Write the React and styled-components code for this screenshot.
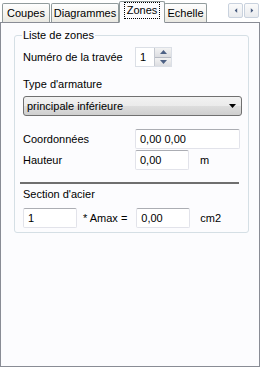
import React from 'react';
import styled, { createGlobalStyle } from 'styled-components';

const Global = createGlobalStyle`
  html, body { margin: 0; padding: 0; background: #ffffff; }
  body { font-family: "Liberation Sans", Arial, sans-serif; font-size: 11px; color: #000; }
`;

const Frame = styled.div`
  width: 261px;
  height: 367px;
  background: #ffffff;
  display: flex;
  flex-direction: column;
`;

const TabStrip = styled.div`
  height: 22px;
  display: flex;
  align-items: flex-end;
  padding-left: 2px;
  position: relative;
  z-index: 1;
`;

const Tab = styled.div`
  box-sizing: border-box;
  height: ${p => (p.$active ? '22px' : '19px')};
  width: ${p => p.$w}px;
  margin-left: ${p => (p.$active ? '-1px' : '0')};
  margin-right: ${p => (p.$active ? '-1px' : '1px')};
  border: 1px solid #919b9c;
  border-bottom: ${p => (p.$active ? '1px solid #fcfcfe' : 'none')};
  border-radius: 2px 2px 0 0;
  background: ${p => (p.$active ? '#fcfcfe' : 'linear-gradient(#fefefe, #f4f3ee 60%, #e9e8e2)')};
  display: flex;
  align-items: ${p => (p.$active ? 'flex-start' : 'center')};
  justify-content: center;
  padding-top: ${p => (p.$active ? '2px' : '0')};
  font-size: 11px;
  line-height: 13px;
  margin-bottom: ${p => (p.$active ? '-1px' : '0')};
`;

const Focus = styled.span`
  outline: 1px dotted #000;
  outline-offset: 1px;
  padding: 0 1px;
`;

const Scroller = styled.div`
  margin-left: auto;
  align-self: flex-start;
  margin-top: 3px;
  margin-right: 2px;
  display: flex;
  gap: 1px;
`;

const ScrollBtn = styled.div`
  box-sizing: border-box;
  width: 15px;
  height: 15px;
  border: 1px solid #c9d2de;
  border-radius: 2px;
  background: linear-gradient(#fbfbfb, #e9ebee);
  display: flex;
  align-items: center;
  justify-content: center;
`;

const Panel = styled.div`
  box-sizing: border-box;
  width: 260px;
  height: 345px;
  border: 1px solid #898c95;
  background: #fcfcfe;
  padding: 6px 10px 0 13px;
`;

const GroupBox = styled.fieldset`
  box-sizing: border-box;
  margin: 0;
  width: 235px;
  height: 204px;
  border: 1px solid #d5dfe5;
  border-radius: 3px;
  padding: 0 0 0 8px;
  display: flex;
  flex-direction: column;
`;

const Legend = styled.legend`
  padding: 0 1px;
  margin-left: -1px;
  font-size: 11px;
  line-height: 13px;
`;

const Row = styled.div`
  display: flex;
  align-items: center;
  height: ${p => p.$h || 20}px;
  margin-top: ${p => p.$mt || 0}px;
`;

const Label = styled.div`
  width: ${p => p.$w || 112}px;
  flex: none;
  white-space: nowrap;
`;

const TextBox = styled.div`
  box-sizing: border-box;
  width: ${p => p.$w}px;
  height: 20px;
  margin-left: ${p => p.$ml || 0}px;
  border: 1px solid #e2e3ea;
  border-top-color: #abadb3;
  border-radius: 2px;
  background: #fff;
  padding: 0 4px;
  display: flex;
  align-items: center;
  flex: none;
`;

const Spinner = styled.div`
  display: flex;
  box-sizing: border-box;
  width: 37px;
  height: 20px;
  border: 1px solid #dbdfe6;
  background: #fff;
`;

const SpinText = styled.div`
  flex: 1;
  padding-left: 4px;
  display: flex;
  align-items: center;
`;

const SpinButtons = styled.div`
  width: 16px;
  display: flex;
  flex-direction: column;
  border-left: 1px solid #c5c9d1;
`;

const SpinBtn = styled.div`
  flex: 1;
  background: linear-gradient(#f3f3f3, #dcdde1);
  border-bottom: ${p => (p.$top ? '1px solid #b6bac3' : 'none')};
  display: flex;
  align-items: center;
  justify-content: center;
`;

const Select = styled.div`
  box-sizing: border-box;
  width: 219px;
  height: 20px;
  border: 1px solid #707070;
  border-radius: 3px;
  background: linear-gradient(#f2f2f2 0%, #ebebeb 50%, #dddddd 51%, #cfcfcf 100%);
  display: flex;
  align-items: center;
  padding: 0 5px 0 3px;
  justify-content: space-between;
`;

const Unit = styled.div`
  margin-left: ${p => p.$ml}px;
`;

const Separator = styled.div`
  width: 219px;
  height: 2px;
  margin-left: -3px;
  background: #6f6f6f;
  margin-top: ${p => p.$mt}px;
`;

const Triangle = ({ dir, color = '#4d6185', size = 5 }) => {
  const pts = {
    up: '0,4 3.5,0 7,4',
    down: '0,0 7,0 3.5,4',
    left: '4,0 4,7 0,3.5',
    right: '0,0 0,7 4,3.5',
  }[dir];
  const vertical = dir === 'up' || dir === 'down';
  return (
    <svg width={vertical ? 7 : 4} height={vertical ? 4 : 7} viewBox={vertical ? '0 0 7 4' : '0 0 4 7'} style={{ display: 'block', transform: `scale(${size / 7})` }}>
      <polygon points={pts} fill={color} />
    </svg>
  );
};

export default function App() {
  return (
    <Frame>
      <Global />
      <TabStrip>
        <Tab $w={48}>Coupes</Tab>
        <Tab $w={68}>Diagrammes</Tab>
        <Tab $w={46} $active><Focus>Zones</Focus></Tab>
        <Tab $w={43}>Echelle</Tab>
        <Scroller>
          <ScrollBtn><Triangle dir="left" color="#4a5d80" size={5} /></ScrollBtn>
          <ScrollBtn><Triangle dir="right" color="#4a5d80" size={5} /></ScrollBtn>
        </Scroller>
      </TabStrip>
      <Panel>
        <GroupBox>
          <Legend>Liste de zones</Legend>
          <Row $mt={5}>
            <Label>Numéro de la travée</Label>
            <Spinner>
              <SpinText>1</SpinText>
              <SpinButtons>
                <SpinBtn $top><Triangle dir="up" size={7} /></SpinBtn>
                <SpinBtn><Triangle dir="down" size={7} /></SpinBtn>
              </SpinButtons>
            </Spinner>
          </Row>
          <Row $mt={8} $h={17}>
            <Label>Type d'armature</Label>
          </Row>
          <Row $mt={4}>
            <Select>
              <span>principale inférieure</span>
              <Triangle dir="down" color="#000" size={7} />
            </Select>
          </Row>
          <Row $mt={13}>
            <Label>Coordonnées</Label>
            <TextBox $w={105}>0,00 0,00</TextBox>
          </Row>
          <Row $mt={1}>
            <Label>Hauteur</Label>
            <TextBox $w={54}>0,00</TextBox>
            <Unit $ml={11}>m</Unit>
          </Row>
          <Separator $mt={12} />
          <Row $mt={2} $h={16}>
            <Label>Section d'acier</Label>
          </Row>
          <Row $mt={6}>
            <TextBox $w={54}>1</TextBox>
            <Unit $ml={6}>* Amax =</Unit>
            <TextBox $w={54} $ml={9}>0,00</TextBox>
            <Unit $ml={10}>cm2</Unit>
          </Row>
        </GroupBox>
      </Panel>
    </Frame>
  );
}
